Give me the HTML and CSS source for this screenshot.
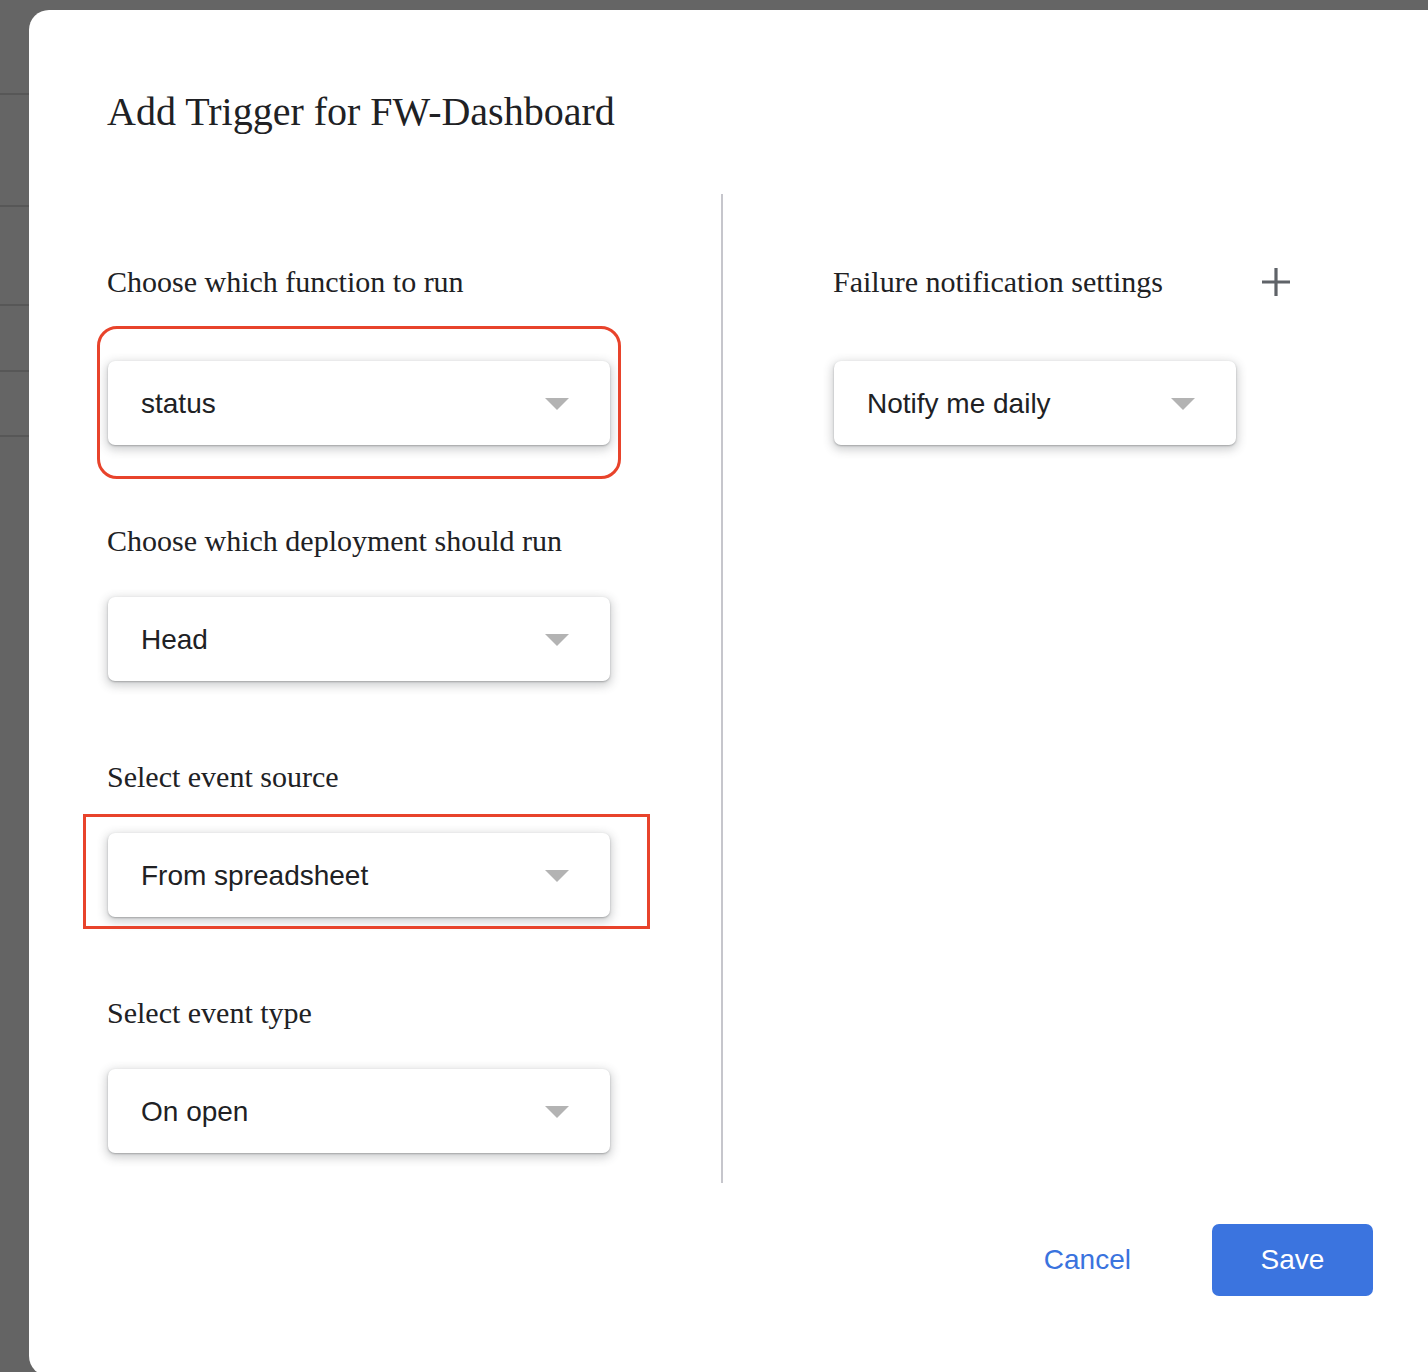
FILE: index.html
```html
<!DOCTYPE html>
<html>
<head>
<meta charset="utf-8">
<link rel="stylesheet" href="styles.css">
</head>
<body>
<div class="backdrop">
  <div class="bg-row r1"></div>
  <div class="bg-row r2"></div>
  <div class="bg-row r3"></div>
  <div class="bg-row r4"></div>
  <div class="bg-row r5"></div>
</div>
<div class="dialog">
  <h1 class="title">Add Trigger for FW-Dashboard</h1>
  <div class="content">
    <div class="col left">
      <div class="field first">
        <div class="label">Choose which function to run</div>
        <div class="select">
          <span class="value">status</span>
          <span class="arrow"></span>
          <span class="annot rounded"></span>
        </div>
      </div>
      <div class="field">
        <div class="label">Choose which deployment should run</div>
        <div class="select">
          <span class="value">Head</span>
          <span class="arrow"></span>
        </div>
      </div>
      <div class="field">
        <div class="label">Select event source</div>
        <div class="select">
          <span class="value">From spreadsheet</span>
          <span class="arrow"></span>
          <span class="annot square"></span>
        </div>
      </div>
      <div class="field">
        <div class="label">Select event type</div>
        <div class="select">
          <span class="value">On open</span>
          <span class="arrow"></span>
        </div>
      </div>
    </div>
    <div class="divider"></div>
    <div class="col right">
      <div class="field first">
        <div class="label-row">
          <div class="label">Failure notification settings</div>
          <svg class="plus" width="30" height="30" viewBox="0 0 30 30"><path d="M15 1v28M1 15h28" stroke="#5f6368" stroke-width="3.2" fill="none"/></svg>
        </div>
        <div class="select narrow">
          <span class="value">Notify me daily</span>
          <span class="arrow"></span>
        </div>
      </div>
    </div>
  </div>
  <div class="footer">
    <button class="btn cancel">Cancel</button>
    <button class="btn save">Save</button>
  </div>
</div>
</body>
</html>
```

FILE: styles.css
```css
html, body {
  margin: 0;
  padding: 0;
}
body {
  width: 1428px;
  height: 1372px;
  overflow: hidden;
  background: #646464;
  position: relative;
  font-family: "Liberation Serif", "Times New Roman", serif;
}
.backdrop {
  display: flex;
  flex-direction: column;
}
.bg-row {
  border-bottom: 2px solid #575757;
  background: #656565;
}
.r1 { height: 93px; }
.r2 { height: 110px; }
.r3 { height: 97px; }
.r4 { height: 64px; }
.r5 { height: 63px; }

.dialog {
  position: absolute;
  left: 29px;
  top: 10px;
  width: 1420px;
  height: 1366px;
  box-sizing: border-box;
  background: #fff;
  border-radius: 20px;
  padding: 0 76px 0 78px;
  display: flex;
  flex-direction: column;
}
.title {
  margin: 82px 0 0 0;
  font-family: "Liberation Serif", "Times New Roman", serif;
  font-weight: normal;
  font-size: 40px;
  line-height: 40px;
  color: #202124;
}
.content {
  display: flex;
  margin-top: 62px;
  height: 989px;
}
.col {
  display: flex;
  flex-direction: column;
  gap: 81px;
  padding-top: 73px;
}
.col.left {
  width: 614px;
  padding-left: 1px;
  box-sizing: border-box;
}
.col.right {
  padding-left: 111px;
}
.divider {
  width: 2px;
  height: 989px;
  background: #c6c6cc;
}
.field {
  display: flex;
  flex-direction: column;
  gap: 41px;
}
.field.first {
  gap: 64px;
}
.label {
  font-size: 30px;
  line-height: 30px;
  color: #202124;
  white-space: nowrap;
  margin-left: -1px;
}
.label-row {
  display: flex;
  justify-content: space-between;
  align-items: center;
  width: 456px;
}
.plus {
  display: block;
  margin-right: -1px;
}
.select {
  position: relative;
  width: 502px;
  height: 84px;
  box-sizing: border-box;
  border-radius: 7px;
  background: #fff;
  box-shadow: 0 1px 2px rgba(60, 64, 67, 0.35), 0 3px 10px 2px rgba(60, 64, 67, 0.24);
  display: flex;
  align-items: center;
  justify-content: space-between;
  padding: 2px 41px 0 33px;
  font-family: "Liberation Sans", Arial, sans-serif;
  font-size: 28px;
  color: #202124;
}
.select.narrow {
  width: 402px;
}
.arrow {
  width: 0;
  height: 0;
  border-left: 12px solid transparent;
  border-right: 12px solid transparent;
  border-top: 12px solid #b3b3b3;
  margin-top: -1px;
}
.annot {
  position: absolute;
  border: 3.5px solid #e8432b;
  pointer-events: none;
}
.annot.rounded {
  top: -35px;
  bottom: -34px;
  left: -11px;
  right: -11px;
  border-radius: 20px;
}
.annot.square {
  top: -19px;
  bottom: -12px;
  left: -25px;
  right: -40px;
}
.footer {
  display: flex;
  justify-content: flex-end;
  align-items: center;
  margin-top: 41px;
}
.btn {
  font-family: "Liberation Sans", Arial, sans-serif;
  font-size: 28px;
  height: 72px;
  border: none;
  border-radius: 7px;
  cursor: pointer;
}
.cancel {
  background: transparent;
  color: #3a73de;
  padding: 0 24px;
  margin-right: 57px;
}
.save {
  background: #3b74df;
  color: #fff;
  width: 161px;
}
```
